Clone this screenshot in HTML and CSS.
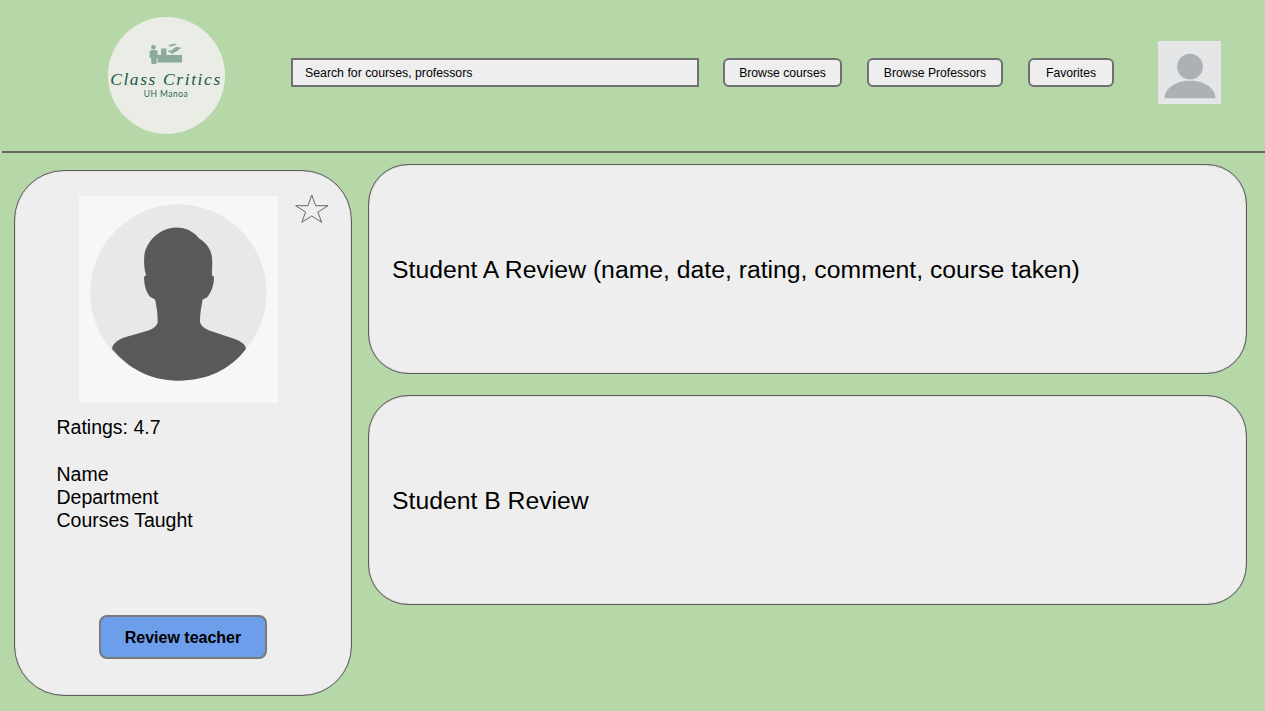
FILE: index.html
```html
<!DOCTYPE html>
<html lang="en">
<head>
<meta charset="utf-8">
<title>Class Critics</title>
<link rel="stylesheet" href="styles.css">
</head>
<body>
<header class="header">
  <div class="logo">
    <svg class="logo-icon" viewBox="149 43 34 21" width="34" height="21" aria-hidden="true">
      <circle cx="153.500" cy="47.300" r="2.300"/>
      <path d="M151 50h5l1.500 1 .5 7h-1.200l-.3 6h-5l-.4-6-1.600-.4.100-6.200z"/>
      <rect x="157.500" y="55" width="24.500" height="7.500"/>
      <rect x="161" y="48.500" width="5.500" height="6.500"/>
      <path d="M168 51.500c.8-1.600 2.400-1.300 3.200-.7 1-1.200 2.300-2 3.200-2.800.9-.9 2-1.300 3.200-1 .9.100 2.300.5 4 1-1.500.6-3 1.400-3.900 2.600-1 1.100-2.300 1.800-3.700 1.700l-1 1.700z"/>
      <path d="M168.500 46c.6-1.300 1.900-1.700 2.900-1.200.6-1.200 2.400-1.500 3.400-.7 1 0 1.500.5 1.700 1.100l-3.200.2c-.8 1.100-3 1.500-4.800.6z"/>
    </svg>
    <div class="logo-title">Class Critics</div>
    <div class="logo-sub">UH Manoa</div>
  </div>
  <div class="search">Search for courses, professors</div>
  <nav class="nav">
    <a class="nav-btn nav-courses">Browse courses</a>
    <a class="nav-btn nav-professors">Browse Professors</a>
    <a class="nav-btn nav-favorites">Favorites</a>
  </nav>
  <div class="avatar">
    <svg viewBox="0 0 63 63" width="63" height="63" aria-hidden="true">
      <circle cx="32" cy="25.700" r="12.900"/>
      <path d="M6.500 57.300c0-10 11-17.600 25.500-17.600s25.500 7.600 25.500 17.600z"/>
    </svg>
  </div>
</header>
<main class="main">
  <aside class="profile">
    <div class="photo">
      <svg viewBox="237 137 597 622" width="199" height="207" aria-hidden="true">
        <circle class="photo-bg" cx="535" cy="427" r="265"/>
        <path class="photo-person" d="M528 232C560 232 582 246 597 264C622 280 637 300 637 335L636 375L642 380C642 405 635 425 622 441L608 448C604 470 600 490 600 515C603 527 612 534 628 541L700 565C722 573 738 582 738 597C690 660 620 692 535 692C450 692 385 655 336 597C336 582 352 570 372 562L440 543C458 537 472 528 473 515C473 490 470 470 465 448L450 440C438 425 432 405 432 380L438 375C432 355 431 335 433 315C438 275 480 232 528 232Z"/>
      </svg>
    </div>
    <svg class="star" viewBox="295 194 34 30" width="34" height="30" aria-hidden="true">
      <polygon points="311.800,195 315.600,205.700 328,205.700 317.900,212.100 321.700,222.300 311.800,216 301.800,222.300 305.600,212.100 295.700,205.700 307.900,205.700"/>
    </svg>
    <p class="rating">Ratings: 4.7</p>
    <p class="details">Name<br>Department<br>Courses Taught</p>
    <a class="review-btn">Review teacher</a>
  </aside>
  <section class="reviews">
    <article class="review">Student A Review (name, date, rating, comment, course taken)</article>
    <article class="review">Student B Review</article>
  </section>
</main>
</body>
</html>
```
FILE: styles.css
```css
* {
  box-sizing: border-box;
}

html,
body {
  height: 100%;
}

body {
  margin: 0;
  overflow: hidden;
  background: #b6d7a8;
  color: #000;
  font-family: "Liberation Sans", Arial, sans-serif;
}

.header {
  display: flex;
  align-items: center;
  height: 153px;
  margin-left: 2px;
  padding: 0 0 6px 105.500px;
  border-bottom: 2px solid #666;
}

.logo {
  display: flex;
  flex-direction: column;
  align-items: center;
  flex: none;
  width: 117px;
  height: 117px;
  margin-top: 6px;
  padding-top: 26px;
  border-radius: 50%;
  background-color: #eaede6;
  background-image: radial-gradient(circle, #e1e5dc 0.6px, transparent 0.8px);
  background-size: 8px 8px;
}

.logo-icon {
  flex: none;
  fill: #8aab9e;
}

.logo-title {
  margin-top: 5.500px;
  font-family: "Liberation Serif", "Times New Roman", serif;
  font-size: 17.500px;
  font-style: italic;
  line-height: 19px;
  letter-spacing: 1.600px;
  white-space: nowrap;
  color: #1a5a45;
}

.logo-sub {
  margin-top: 0;
  font-family: Lato, sans-serif;
  font-size: 8.500px;
  line-height: 10px;
  letter-spacing: 0.500px;
  color: #2a6a54;
}

.search {
  flex: none;
  width: 408px;
  height: 29px;
  margin-left: 66.500px;
  padding-left: 12px;
  border: 2px solid #707070;
  background: #eee;
  font-size: 12.300px;
  line-height: 27px;
}

.nav {
  display: flex;
  flex: none;
  margin-left: 24px;
}

.nav-btn {
  display: block;
  height: 29px;
  border: 2px solid #707070;
  border-radius: 6px;
  background: #eee;
  font-size: 12.200px;
  line-height: 27px;
  text-align: center;
}

.nav-courses {
  width: 119px;
}

.nav-professors {
  width: 136px;
  margin-left: 25px;
}

.nav-favorites {
  width: 86px;
  margin-left: 25px;
}

.avatar {
  flex: none;
  width: 63px;
  height: 63px;
  margin-left: 44px;
  background: #e4e6e8;
  fill: #adb1b5;
}

.avatar svg {
  display: block;
}

.main {
  display: flex;
  align-items: flex-start;
  padding-left: 14px;
}

.profile {
  position: relative;
  flex: none;
  width: 338px;
  height: 526px;
  margin-top: 17px;
  padding-top: 25px;
  border: 1px solid #5c5c5c;
  border-radius: 50px;
  background: #eee;
  box-shadow: inset 0 0 1px #5c5c5c;
}

.photo {
  width: 199px;
  height: 207px;
  margin-left: 64px;
  background: #f7f7f7;
}

.photo svg {
  display: block;
}

.photo-bg {
  fill: #e7e8ea;
}

.photo-person {
  fill: #58595b;
}

.star {
  position: absolute;
  top: 23px;
  left: 280px;
  fill: none;
  stroke: #666;
  stroke-width: 1;
}

.rating,
.details {
  margin: 0;
  padding-left: 41.500px;
  font-size: 19.500px;
  line-height: 23px;
}

.rating {
  margin-top: 13px;
}

.details {
  margin-top: 24px;
}

.review-btn {
  display: block;
  width: 168px;
  height: 44px;
  margin-top: 83px;
  margin-left: 84px;
  border: 2px solid #7a7a7a;
  border-radius: 8px;
  background: #6d9eeb;
  font-size: 16px;
  font-weight: 700;
  line-height: 41px;
  text-align: center;
}

.reviews {
  display: flex;
  flex: none;
  flex-direction: column;
  gap: 21px;
  width: 879px;
  margin-top: 11px;
  margin-left: 16px;
}

.review {
  display: flex;
  align-items: center;
  height: 210px;
  padding: 1px 0 0 23px;
  border: 1px solid #5c5c5c;
  border-radius: 40px;
  background: #eee;
  box-shadow: inset 0 0 1px #5c5c5c;
  font-size: 24.750px;
}
```
